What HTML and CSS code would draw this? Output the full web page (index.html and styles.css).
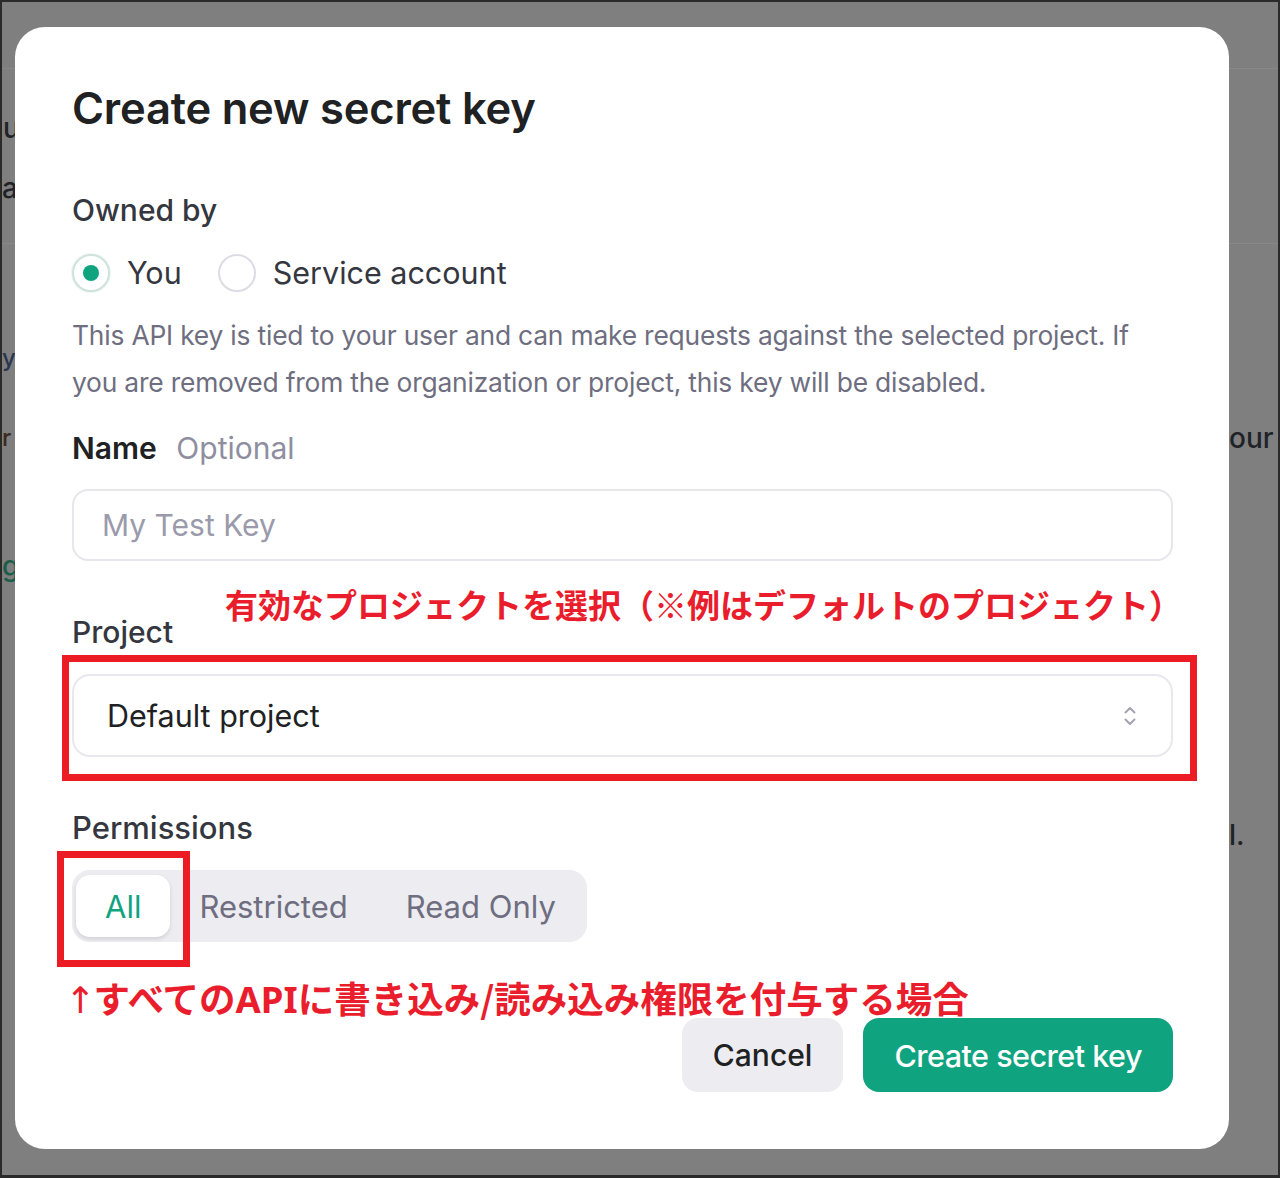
FILE: index.html
```html
<!DOCTYPE html>
<html lang="ja">
<head>
<meta charset="utf-8">
<title>Create new secret key</title>
<link rel="stylesheet" href="styles.css">
</head>
<body>
<div class="frame">
  <div class="backdrop">
    <div class="bg-line bg-line-1"></div>
    <div class="bg-line bg-line-2"></div>
    <span class="bg-frag frag-u">u</span>
    <span class="bg-frag frag-a">a</span>
    <span class="bg-frag frag-ya">y a</span>
    <span class="bg-frag frag-r">r .</span>
    <span class="bg-frag frag-g">g</span>
    <span class="bg-frag frag-our">our</span>
    <span class="bg-frag frag-l">l.</span>
  </div>

  <div class="modal">
    <h1 class="title">Create new secret key</h1>

    <div class="label owned">Owned by</div>
    <div class="radios">
      <label class="radio">
        <span class="radio-circle checked"><span class="radio-dot"></span></span>
        <span class="radio-text">You</span>
      </label>
      <label class="radio">
        <span class="radio-circle"></span>
        <span class="radio-text">Service account</span>
      </label>
    </div>
    <p class="desc">This API key is tied to your user and can make requests against the selected project. If you are removed from the organization or project, this key will be disabled.</p>

    <div class="label name-label">Name <span class="optional">Optional</span></div>
    <div class="input"><span class="placeholder">My Test Key</span></div>

    <div class="label project-label">Project</div>
    <div class="select">
      <span class="select-value">Default project</span>
      <svg class="chevrons" width="14" height="24" viewBox="0 0 14 24" fill="none" stroke="#a4a4b2" stroke-width="2" stroke-linecap="round" stroke-linejoin="round">
        <path d="M2.5 8.5 L7 4 L11.5 8.5"/>
        <path d="M2.5 15.5 L7 20 L11.5 15.5"/>
      </svg>
    </div>

    <div class="label perm-label">Permissions</div>
    <div class="segmented">
      <span class="seg active">All</span>
      <span class="seg">Restricted</span>
      <span class="seg">Read Only</span>
    </div>

    <div class="actions">
      <button class="btn btn-cancel">Cancel</button>
      <button class="btn btn-primary">Create secret key</button>
    </div>

    <div class="note note-project">有効なプロジェクトを選択（※例はデフォルトのプロジェクト）</div>
    <div class="mark mark-project"></div>
    <div class="mark mark-all"></div>
    <div class="note note-all"><span class="arrow">↑</span>すべての<b>API</b>に書き込み/読み込み権限を付与する場合</div>
  </div>
</div>
</body>
</html>
```

FILE: styles.css
```css
* { box-sizing: border-box; }
html, body { margin: 0; padding: 0; }
body {
  background: #7f7f7f;
  font-family: Inter, "Noto Sans", "Liberation Sans", sans-serif;
}
.frame {
  position: relative;
  width: 1280px;
  height: 1178px;
  background: #7f7f7f;
  border: 2px solid #2a2a2a;
  border-bottom-width: 3px;
  overflow: hidden;
  padding: 25px 0 0 13px;
}
.backdrop {
  position: absolute;
  inset: 0;
}
.bg-line {
  position: absolute;
  left: 0;
  right: 0;
  height: 1px;
  background: #888888;
}
.bg-line-1 { top: 66px; }
.bg-line-2 { top: 241px; }
.bg-frag {
  position: absolute;
  font-family: Inter, "Liberation Sans", sans-serif;
  font-size: 28px;
  line-height: 32px;
  color: #1f2328;
  font-weight: 500;
}
.frag-u { left: 1px; top: 110px; }
.frag-a { left: 0px; top: 170px; }
.frag-ya { left: 0px; top: 340px; color: #2a3550; font-size: 24px; }
.frag-r { left: 0px; top: 420px; font-size: 24px; color: #3a2a20; }
.frag-g { left: 0px; top: 548px; color: #1b5d4a; }
.frag-our { left: 1227px; top: 420px; }
.frag-l { left: 1227px; top: 817px; }

.modal {
  position: relative;
  width: 1214px;
  height: 1122px;
  background: #ffffff;
  border-radius: 30px;
  padding: 57px 56px 0 57px;
  display: flex;
  flex-direction: column;
  color: #202123;
}
.title {
  margin: 0;
  font-size: 43.5px;
  line-height: 48px;
  font-weight: 600;
  color: #202123;
  letter-spacing: -0.2px;
}
.label {
  font-size: 30px;
  line-height: 40px;
  font-weight: 500;
  color: #353740;
}
.owned { margin-top: 58px; }
.radios {
  margin-top: 23px;
  display: flex;
  align-items: center;
  gap: 36px;
  height: 40px;
}
.radio {
  display: flex;
  align-items: center;
  gap: 17px;
}
.radio-circle {
  width: 38px;
  height: 38px;
  border-radius: 50%;
  border: 2px solid #dcdce4;
  display: flex;
  align-items: center;
  justify-content: center;
  background: #fff;
}
.radio-circle.checked {
  border-color: #cfe3dd;
  box-shadow: 0 0 0 1px #eef5f3;
}
.radio-dot {
  width: 16px;
  height: 16px;
  border-radius: 50%;
  background: #10a37f;
}
.radio-text {
  font-size: 30.5px;
  line-height: 40px;
  color: #353740;
}
.desc {
  margin: 19px 0 0 0;
  font-size: 26.4px;
  line-height: 47px;
  color: #6e6e80;
  letter-spacing: -0.2px;
}
.name-label {
  margin-top: 22px;
  font-weight: 600;
  color: #202123;
}
.optional {
  font-weight: 400;
  color: #8e8ea0;
  margin-left: 12px;
}
.input {
  margin-top: 21px;
  height: 72px;
  border: 2px solid #e6e6ec;
  border-radius: 16px;
  display: flex;
  align-items: center;
  padding-left: 28px;
}
.placeholder {
  font-size: 30px;
  color: #9a9aab;
}
.project-label { margin-top: 51px; }
.select {
  margin-top: 22px;
  height: 83px;
  border: 2px solid #e8e8ee;
  border-radius: 18px;
  display: flex;
  align-items: center;
  justify-content: space-between;
  padding: 0 34px 0 33px;
}
.select-value {
  font-size: 30.5px;
  color: #202123;
}
.chevrons { display: block; }
.perm-label { margin-top: 51px; font-size: 31px; }
.segmented {
  margin-top: 22px;
  align-self: flex-start;
  display: flex;
  align-items: center;
  height: 72px;
  padding: 5px 2px 5px 4px;
  background: #ececf1;
  border-radius: 18px;
}
.seg {
  height: 62px;
  display: flex;
  align-items: center;
  padding: 0 29px;
  font-size: 31px;
  color: #6e6e80;
  border-radius: 14px;
}
.seg.active {
  background: #ffffff;
  color: #10a37f;
  box-shadow: 0 2px 4px rgba(0, 0, 0, 0.12);
}
.actions {
  margin-top: 76px;
  display: flex;
  justify-content: flex-end;
  gap: 20px;
}
.btn {
  height: 74px;
  border: none;
  border-radius: 16px;
  padding: 0 31px;
  font-family: Inter, "Liberation Sans", sans-serif;
  font-size: 30px;
  font-weight: 500;
  cursor: pointer;
}
.btn-cancel {
  background: #ececf1;
  color: #202123;
}
.btn-primary {
  background: #10a37f;
  color: #ffffff;
  font-size: 30.5px;
  letter-spacing: -0.5px;
}

/* annotations laid over the dialog */
.note {
  position: absolute;
  font-family: "Noto Sans CJK JP", "Noto Sans", sans-serif;
  font-weight: 700;
  font-size: 33px;
  line-height: 44px;
  color: #ea1d2c;
  white-space: nowrap;
}
.note b { font-weight: 700; font-family: "Noto Sans", "Noto Sans CJK JP", sans-serif; }
.note-project { left: 210px; top: 555px; }
.note-all { left: 50px; top: 949px; font-size: 36.5px; }
.note-all .arrow {
  font-family: "Noto Sans", "DejaVu Sans", sans-serif;
  font-weight: 400;
  margin-right: -2px;
}
.mark {
  position: absolute;
  border: 7px solid #ec1c24;
}
.mark-project { left: 47px; top: 628px; width: 1135px; height: 126px; }
.mark-all { left: 42px; top: 824px; width: 133px; height: 116px; }
```
